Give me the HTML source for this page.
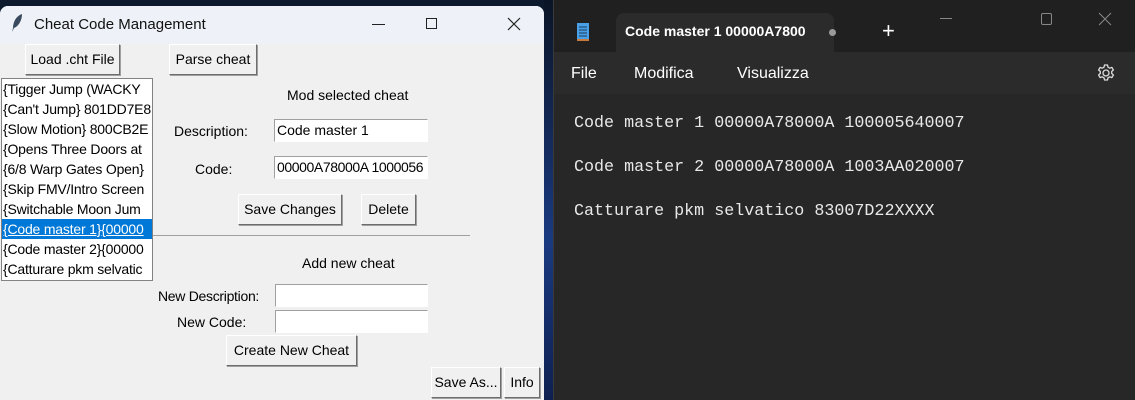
<!DOCTYPE html>
<html><head><meta charset="utf-8"><style>
*{margin:0;padding:0;box-sizing:border-box}
body{width:1135px;height:400px;overflow:hidden;background:#0d1a2e;position:relative;font-family:"Liberation Sans",sans-serif;}
.a{position:absolute;white-space:nowrap}
#tk{left:0;top:6px;width:544px;height:394px;background:#f0f0f0;border-radius:8px 8px 0 0;overflow:hidden}
#tt{left:0;top:0;width:544px;height:38px;background:#eef2f8}
.btn{position:absolute;background:#f0f0f0;border:1px solid;border-color:#fff #6d6d6d #6d6d6d #fff;box-shadow:1px 1px 0 #a0a0a0;font-size:14px;color:#000;text-align:center;line-height:28px;height:31px}
.lbl{position:absolute;font-size:14px;color:#000;white-space:nowrap}
.ent{position:absolute;background:#fff;border:1px solid;border-color:#a0a0a0 #fff #fff #a0a0a0;font-size:14px;line-height:21px;padding-left:2px;height:23px;overflow:hidden;white-space:nowrap}
#lb{left:1px;top:72px;width:152px;height:203px;background:#fff;border:1px solid #828282;overflow:hidden}
#lb div{height:20px;line-height:20px;font-size:14px;white-space:nowrap;padding-left:1px;letter-spacing:-0.2px}
#lb .sel{background:#0078d7;color:#fff;text-decoration:underline}
#np{left:553px;top:0;width:582px;height:400px;background:#272727;border-left:1px solid #3a3a3a}
</style></head><body>
<div class="a" style="left:544px;top:0;width:9px;height:400px;background:linear-gradient(#0b1526,#1a3a80 60%,#0e2050)"></div>
<div class="a" id="tk">
 <div class="a" id="tt"></div>
 <svg class="a" style="left:10px;top:7px" width="14" height="20" viewBox="0 0 14 20"><path d="M12 1 C6 3 3 9 3 15 L2 19 L4 15 C9 13 12 7 12 1Z" fill="#3a4a5e"/></svg>
 <div class="lbl" style="left:34px;top:10px;font-size:15px;color:#111">Cheat Code Management</div>
 <div class="a" style="left:372px;top:18px;width:13px;height:1px;background:#222"></div>
 <div class="a" style="left:426px;top:12px;width:11px;height:11px;border:1px solid #222"></div>
 <svg class="a" style="left:507px;top:11px" width="14" height="14"><path d="M1 1L13 13M13 1L1 13" stroke="#222" stroke-width="1.2"/></svg>
 <div class="btn" style="left:25px;top:38px;width:95px">Load .cht File</div>
 <div class="btn" style="left:169px;top:38px;width:88px">Parse cheat</div>
 <div class="a" id="lb">
  <div>{Tigger Jump (WACKY</div><div>{Can't Jump} 801DD7E8</div><div>{Slow Motion} 800CB2E</div><div>{Opens Three Doors at</div><div>{6/8 Warp Gates Open}</div><div>{Skip FMV/Intro Screen</div><div>{Switchable Moon Jum</div><div class="sel">{Code master 1}{00000</div><div>{Code master 2}{00000</div><div>{Catturare pkm selvatic</div>
 </div>
 <div class="lbl" style="left:287px;top:81px">Mod selected cheat</div>
 <div class="lbl" style="left:174px;top:117px">Description:</div>
 <div class="ent" style="left:274px;top:113px;width:154px">Code master 1</div>
 <div class="lbl" style="left:195px;top:155px">Code:</div>
 <div class="ent" style="left:274px;top:150px;width:154px;letter-spacing:-0.4px">00000A78000A 1000056</div>
 <div class="btn" style="left:238px;top:188px;width:104px">Save Changes</div>
 <div class="btn" style="left:361px;top:188px;width:55px">Delete</div>
 <div class="a" style="left:153px;top:229px;width:317px;height:1px;background:#a0a0a0"></div>
 <div class="lbl" style="left:302px;top:249px">Add new cheat</div>
 <div class="lbl" style="left:158px;top:282px;letter-spacing:-0.3px">New Description:</div>
 <div class="ent" style="left:275px;top:278px;width:153px"></div>
 <div class="lbl" style="left:177px;top:308px">New Code:</div>
 <div class="ent" style="left:275px;top:304px;width:153px"></div>
 <div class="btn" style="left:226px;top:329px;width:131px">Create New Cheat</div>
 <div class="btn" style="left:431px;top:361px;width:70px">Save As...</div>
 <div class="btn" style="left:504px;top:361px;width:36px">Info</div>
</div>
<div class="a" id="np">
 <div class="a" style="left:0;top:0;width:582px;height:52px;background:#202020"></div>
 <div class="a" style="left:62px;top:13px;width:218px;height:40px;background:#2b2b2b;border-radius:8px 8px 0 0"></div>
 <div class="a" style="left:0;top:52px;width:582px;height:42px;background:#2b2b2b"></div>
 <svg class="a" style="left:22px;top:22px" width="14" height="20"><rect x="1" y="1" width="12" height="16" fill="#4aa0e6"/><path d="M3 5H11M3 8H11M3 11H11M3 14H11" stroke="#1a3a5a" stroke-width="1"/><rect x="1" y="17" width="12" height="2" fill="#c87a3a"/></svg>
 <div class="lbl" style="left:71px;top:23px;color:#fff;font-size:14px;font-weight:bold">Code master 1 00000A7800</div>
 <div class="a" style="left:275px;top:29px;width:7px;height:7px;border-radius:50%;background:#9a9a9a"></div>
 <div class="lbl" style="left:328px;top:18px;color:#fff;font-size:22px;font-weight:300">+</div>
 <div class="a" style="left:386px;top:18px;width:12px;height:1px;background:#888"></div>
 <div class="a" style="left:487px;top:13px;width:11px;height:12px;border:1px solid #888;border-radius:2px"></div>
 <svg class="a" style="left:544px;top:12px" width="14" height="14"><path d="M1 1L13 13M13 1L1 13" stroke="#888" stroke-width="1"/></svg>
 <div class="lbl" style="left:17px;top:65px;color:#fff;font-size:16px">File</div>
 <div class="lbl" style="left:80px;top:65px;color:#fff;font-size:16px">Modifica</div>
 <div class="lbl" style="left:183px;top:65px;color:#fff;font-size:16px">Visualizza</div>
 <svg class="a" style="left:542px;top:63px" width="20" height="20" viewBox="0 0 20 20"><circle cx="10" cy="10" r="3" fill="none" stroke="#ddd" stroke-width="1.3"/><path d="M8.5 2h3l.5 2.2 1.8 1 2.1-.8 1.5 2.6-1.7 1.5v2l1.7 1.5-1.5 2.6-2.1-.8-1.8 1-.5 2.2h-3l-.5-2.2-1.8-1-2.1.8-1.5-2.6 1.7-1.5v-2L2.6 7l1.5-2.6 2.1.8 1.8-1z" fill="none" stroke="#ddd" stroke-width="1.3" stroke-linejoin="round"/></svg>
 <div class="a" style="left:20px;top:102px;color:#e8e8e8;font-family:'Liberation Mono',monospace;font-size:16.7px;line-height:44px;white-space:pre">Code master 1 00000A78000A 100005640007
Code master 2 00000A78000A 1003AA020007
Catturare pkm selvatico 83007D22XXXX</div>
</div>
</body></html>
